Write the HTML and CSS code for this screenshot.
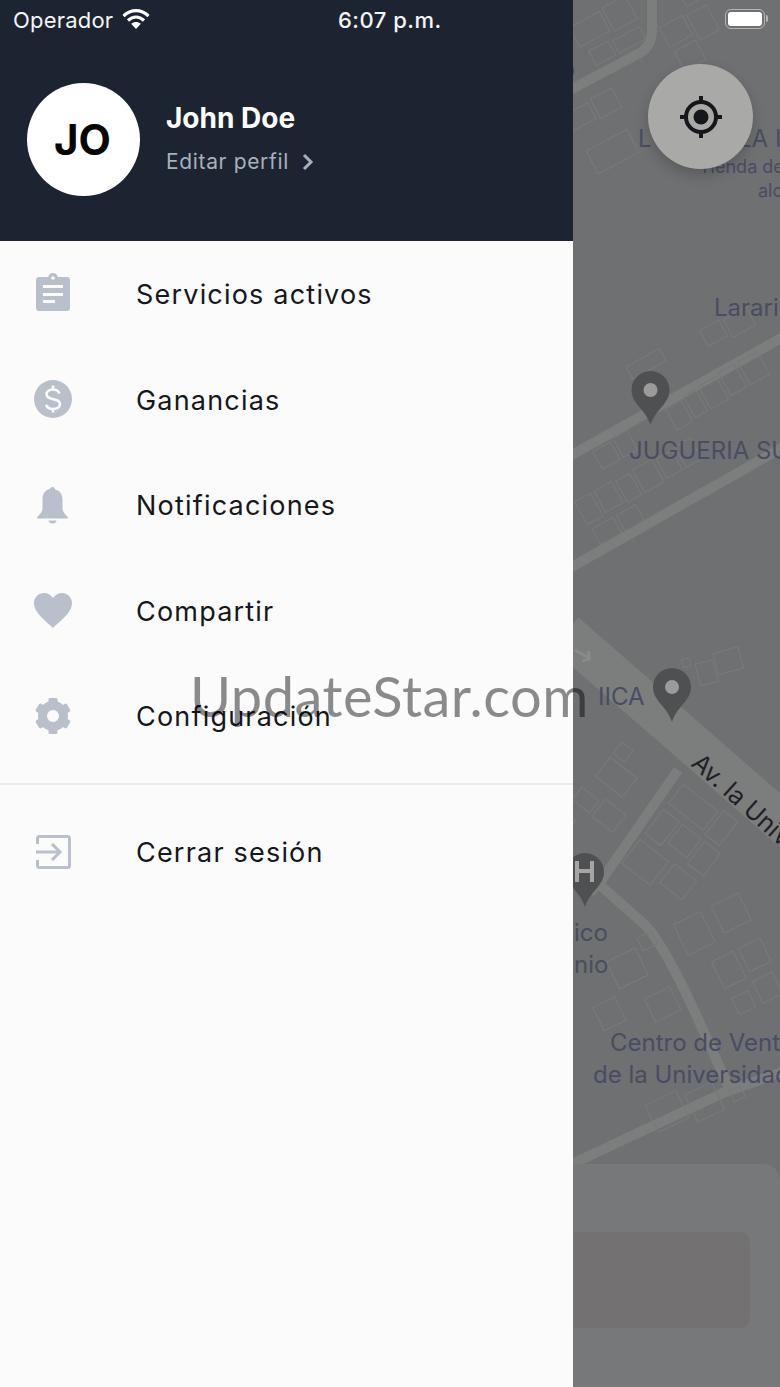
FILE: index.html
```html
<!DOCTYPE html>
<html lang="es">
<head>
    <meta charset="UTF-8">
    <meta name="viewport" content="width=device-width, initial-scale=1.0">
    <title>Menu</title>
    <link rel="stylesheet" href="styles.css">
</head>
<body>
    <div class="screen">
        <aside class="drawer">
            <header class="profile">
                <div class="avatar">JO</div>
                <div class="profile-info">
                    <div class="profile-name">John Doe</div>
                    <div class="profile-edit">
                        <span>Editar perfil</span>
                        <svg class="chevron" width="12" height="18" viewBox="0 0 12 18"><path d="M2 2l7 7-7 7"/></svg>
                    </div>
                </div>
            </header>

            <nav class="menu">
                <a class="menu-item">
                    <svg class="menu-icon" viewBox="0 0 44 44">
                        <rect class="solid" x="5" y="5" width="34" height="34" rx="3"/>
                        <circle class="solid" cx="22" cy="6" r="5"/>
                        <circle class="cut" cx="22" cy="6" r="1.800"/>
                        <rect class="cut" x="12" y="13" width="20" height="3"/>
                        <rect class="cut" x="12" y="21" width="20" height="3"/>
                        <rect class="cut" x="12" y="28" width="12" height="3"/>
                    </svg>
                    <span>Servicios activos</span>
                </a>
                <a class="menu-item">
                    <svg class="menu-icon" viewBox="0 0 44 44">
                        <circle class="solid" cx="22" cy="22" r="19"/>
                        <path class="cut-line" d="M28.500 16.500c-1-2.800-3.500-4-6.500-4-3.600 0-6.500 1.800-6.500 4.800 0 6.500 13.500 3.300 13.500 9.800 0 3.100-3 4.900-7 4.900-3.500 0-6-1.500-7-4.300M22 8.500v4M22 31.500v4"/>
                    </svg>
                    <span>Ganancias</span>
                </a>
                <a class="menu-item">
                    <svg class="menu-icon" viewBox="0 0 44 44">
                        <path class="solid" d="M21.500 4c1.600 0 2.500 1 2.600 2.400 5 1.200 7.400 5 7.400 10v9c0 3 2 5 5.500 9v1H6v-1c3.500-4 5.500-6 5.500-9v-9c0-5.400 2.400-9.200 7.400-10.400C19 5 20 4 21.500 4z"/>
                        <path class="solid" d="M17.500 37.500h8c0 4-8 4-8 0z"/>
                    </svg>
                    <span>Notificaciones</span>
                </a>
                <a class="menu-item">
                    <svg class="menu-icon" viewBox="0 0 44 44">
                        <path class="solid" d="M22 40C16 34 3 25 3 15 3 9 8 5 13 5c4 0 7 2 9 5 2-3 5-5 9-5 5 0 10 4 10 10 0 10-13 19-19 25z"/>
                    </svg>
                    <span>Compartir</span>
                </a>
                <a class="menu-item">
                    <svg class="menu-icon" viewBox="0 0 44 44">
                        <circle class="ring" cx="22" cy="22" r="10.500"/>
                        <g class="solid">
                            <rect x="17.500" y="4" width="9" height="7" rx="1.500"/>
                            <rect x="17.500" y="4" width="9" height="7" rx="1.500" transform="rotate(60 22 22)"/>
                            <rect x="17.500" y="4" width="9" height="7" rx="1.500" transform="rotate(120 22 22)"/>
                            <rect x="17.500" y="4" width="9" height="7" rx="1.500" transform="rotate(180 22 22)"/>
                            <rect x="17.500" y="4" width="9" height="7" rx="1.500" transform="rotate(240 22 22)"/>
                            <rect x="17.500" y="4" width="9" height="7" rx="1.500" transform="rotate(300 22 22)"/>
                        </g>
                    </svg>
                    <span>Configuración</span>
                </a>
            </nav>

            <div class="menu-divider"></div>

            <nav class="menu">
                <a class="menu-item">
                    <svg class="menu-icon" viewBox="0 0 44 44">
                        <path class="line" d="M6.500 15V9.500a2 2 0 0 1 2-2h28a2 2 0 0 1 2 2v27a2 2 0 0 1-2 2h-28a2 2 0 0 1-2-2V31"/>
                        <path class="line" d="M5 23h24M21 15l8 8-8 8"/>
                    </svg>
                    <span>Cerrar sesión</span>
                </a>
            </nav>
        </aside>

        <main class="map">
            <svg class="map-canvas" viewBox="573 0 207 1387" width="207" height="1387">
                <g class="roads">
                    <path d="M570 90L640 53Q652 46 652 30V-5"/>
                    <path d="M570 456L785 336"/>
                    <path d="M570 568L785 446"/>
                    <path class="road-wide" d="M565 633L790 829"/>
                    <path d="M678 770L603 878 590 893M600 885L645 925Q665 945 703 1030L730 1090"/>
                    <path d="M570 1165L723 1093 785 1071"/>
                </g>

                <g class="lots">
                    <g transform="rotate(-28 610 40)">
                        <rect x="580" y="10" width="34" height="22"/>
                        <rect x="618" y="8" width="26" height="26"/>
                        <rect x="586" y="40" width="22" height="16"/>
                        <rect x="612" y="42" width="30" height="14"/>
                    </g>
                    <g transform="rotate(-28 700 40)">
                        <rect x="670" y="10" width="26" height="22"/>
                        <rect x="700" y="12" width="22" height="28"/>
                        <rect x="672" y="38" width="24" height="22"/>
                        <rect x="704" y="-20" width="34" height="24"/>
                    </g>
                    <g transform="rotate(-28 600 130)">
                        <rect x="576" y="100" width="26" height="18"/>
                        <rect x="606" y="98" width="24" height="22"/>
                        <rect x="578" y="142" width="46" height="26"/>
                    </g>
                    <g transform="rotate(-29 690 400)">
                        <rect x="650" y="340" width="38" height="14"/>
                        <rect x="580" y="398" width="20" height="20"/>
                        <rect x="604" y="396" width="16" height="22"/>
                        <rect x="664" y="396" width="18" height="24"/>
                        <rect x="686" y="394" width="14" height="24"/>
                        <rect x="704" y="392" width="20" height="26"/>
                        <rect x="728" y="390" width="18" height="26"/>
                        <rect x="750" y="390" width="22" height="26"/>
                        <rect x="732" y="344" width="22" height="18"/>
                        <rect x="758" y="346" width="26" height="20"/>
                    </g>
                    <g transform="rotate(-29 640 500)">
                        <rect x="582" y="470" width="18" height="26"/>
                        <rect x="604" y="470" width="20" height="24"/>
                        <rect x="628" y="472" width="16" height="24"/>
                        <rect x="648" y="470" width="22" height="26"/>
                        <rect x="674" y="472" width="18" height="22"/>
                        <rect x="696" y="470" width="18" height="24"/>
                        <rect x="584" y="502" width="24" height="18"/>
                        <rect x="612" y="502" width="22" height="18"/>
                    </g>
                    <g transform="rotate(-15 720 665)">
                        <rect x="696" y="658" width="18" height="22"/>
                        <rect x="716" y="652" width="26" height="22"/>
                        <rect x="684" y="650" width="8" height="8"/>
                    </g>
                    <g transform="rotate(38 610 790)">
                        <rect x="590" y="745" width="14" height="14"/>
                        <rect x="590" y="764" width="34" height="24"/>
                        <rect x="586" y="805" width="22" height="16"/>
                        <rect x="612" y="800" width="26" height="22"/>
                        <rect x="582" y="835" width="20" height="18"/>
                    </g>
                    <g transform="rotate(38 670 850)">
                        <rect x="640" y="790" width="44" height="24"/>
                        <rect x="688" y="786" width="18" height="30"/>
                        <rect x="640" y="822" width="20" height="30"/>
                        <rect x="664" y="822" width="24" height="24"/>
                        <rect x="692" y="822" width="20" height="28"/>
                        <rect x="640" y="860" width="36" height="30"/>
                        <rect x="682" y="858" width="28" height="24"/>
                    </g>
                    <g transform="rotate(-26 640 990)">
                        <rect x="622" y="950" width="32" height="30"/>
                        <rect x="660" y="942" width="16" height="14"/>
                        <rect x="590" y="985" width="24" height="26"/>
                        <rect x="640" y="1000" width="28" height="26"/>
                        <rect x="594" y="1096" width="34" height="30"/>
                        <rect x="634" y="1104" width="30" height="30"/>
                        <rect x="676" y="1120" width="12" height="12"/>
                    </g>
                    <g transform="rotate(-26 740 970)">
                        <rect x="718" y="950" width="24" height="30"/>
                        <rect x="748" y="950" width="24" height="26"/>
                        <rect x="720" y="992" width="18" height="18"/>
                        <rect x="746" y="986" width="22" height="24"/>
                        <rect x="700" y="900" width="30" height="34"/>
                        <rect x="742" y="900" width="30" height="30"/>
                    </g>
                </g>

                <g class="labels">
                    <text x="564" y="76" class="label-small">p</text>
                    <text x="638" y="147">L</text>
                    <text x="738" y="147">LA I</text>
                    <text x="699" y="173" class="label-small">Tienda de</text>
                    <text x="758" y="197" class="label-small">alo</text>
                    <text x="714" y="316">Lararium</text>
                    <text x="629" y="459">JUGUERIA SUR</text>
                    <text x="598" y="705">IICA</text>
                    <text x="574" y="941">ico</text>
                    <text x="574" y="973">nio</text>
                    <text x="610" y="1051">Centro de Venta</text>
                    <text x="593" y="1083">de la Universidad</text>
                    <text class="label-road" x="690" y="765" transform="rotate(42 690 765)">Av. la Universidad</text>
                </g>

                <path class="pin-arrow" d="M575 650l14 8M590 659l-2-8M590 659l-8 2"/>

                <g class="pins">
                    <path d="M650.500 371c-10.500 0-19 8.500-19 19 0 14 14 19 19 35 5-16 19-21 19-35 0-10.500-8.500-19-19-19z"/>
                    <path d="M672 668c-10.500 0-19 8.500-19 19 0 14 14 19 19 35 5-16 19-21 19-35 0-10.500-8.500-19-19-19z"/>
                    <path d="M585 853c-10.500 0-19 8.500-19 19 0 14 14 19 19 35 5-16 19-21 19-35 0-10.500-8.500-19-19-19z"/>
                    <circle class="pin-hole" cx="650.500" cy="390" r="7"/>
                    <circle class="pin-hole" cx="672" cy="687" r="7"/>
                    <path class="pin-h" d="M577 861v21M592 861v21M577 871h15"/>
                </g>

                <rect class="sheet" x="560" y="1164" width="220" height="240" rx="16"/>
                <rect class="sheet-inner" x="560" y="1232" width="190" height="96" rx="10"/>
            </svg>

            <button class="locate">
                <svg width="44" height="44" viewBox="0 0 44 44">
                    <circle class="locate-ring" cx="22" cy="22" r="15"/>
                    <circle class="locate-dot" cx="22" cy="22" r="7.500"/>
                    <path class="locate-ticks" d="M22 1v6M22 37v6M1 22h6M37 22h6"/>
                </svg>
            </button>
        </main>

        <div class="status-bar">
            <div class="status-left">
                <span>Operador</span>
                <svg class="wifi" width="28" height="21" viewBox="0 0 28 21">
                    <path d="M1.500 8C9 .8 19 .8 26.500 8M6 12.500c5-4.500 11-4.500 16 0"/>
                    <path class="wifi-tip" d="M14 21l-4.800-5.200c3-2.300 6.600-2.300 9.600 0z"/>
                </svg>
            </div>
            <div class="status-time">6:07 p.m.</div>
            <div class="battery"><div class="battery-fill"></div></div>
        </div>

        <div class="watermark">UpdateStar.com</div>
    </div>
</body>
</html>
```

FILE: styles.css
```css
* {
    box-sizing: border-box;
}

body {
    margin: 0;
    font-family: Inter, "Liberation Sans", sans-serif;
    background: #6f7072;
}

.screen {
    position: relative;
    display: flex;
    width: 780px;
    height: 1387px;
    overflow: hidden;
}

/* drawer */
.drawer {
    width: 573px;
    flex-shrink: 0;
    background: #fbfbfb;
}

.profile {
    height: 241px;
    padding: 83px 0 0 27px;
    display: flex;
    gap: 26px;
    background: #1c2431;
}

.avatar {
    width: 113px;
    height: 113px;
    padding-right: 2px;
    display: flex;
    align-items: center;
    justify-content: center;
    border-radius: 50%;
    background: white;
    color: #050505;
    font-size: 42px;
    font-weight: 700;
}

.profile-info {
    padding-top: 18px;
}

.profile-name {
    color: white;
    font-size: 28px;
    font-weight: 700;
    line-height: 34px;
}

.profile-edit {
    margin-top: 14px;
    display: flex;
    align-items: center;
    gap: 13px;
    color: #a9b0bb;
    font-size: 21px;
    line-height: 26px;
    letter-spacing: 0.65px;
}

.chevron path {
    fill: none;
    stroke: #a9b0bb;
    stroke-width: 3;
}

.menu-item {
    height: 105.5px;
    padding-left: 31px;
    display: flex;
    align-items: center;
    gap: 61px;
    color: #14171c;
    font-size: 27px;
    letter-spacing: 1.2px;
}

.menu-item span {
    margin-top: 2px;
}

.menu-icon {
    width: 44px;
    height: 44px;
    flex-shrink: 0;
}

.menu-icon .solid {
    fill: #b9bfcb;
}

.menu-icon .cut {
    fill: #fbfbfb;
}

.menu-icon .cut-line {
    fill: none;
    stroke: #fbfbfb;
    stroke-width: 2.600;
}

.menu-icon .ring {
    fill: none;
    stroke: #b9bfcb;
    stroke-width: 9;
}

.menu-icon .line {
    fill: none;
    stroke: #b9bfcb;
    stroke-width: 3;
}

.menu-divider {
    height: 2px;
    margin: 14px 0;
    background: #ececee;
}

/* map behind the drawer */
.map {
    position: relative;
    flex: 1;
    background: #6f7072;
}

.map-canvas {
    display: block;
}

.roads path {
    fill: none;
    stroke: #7c7d7d;
    stroke-width: 10;
}

.roads .road-wide {
    stroke-width: 41;
}

.lots rect {
    fill: none;
    stroke: #787979;
    stroke-width: 1.200;
}

.labels text {
    fill: #484d60;
    font-size: 24px;
}

.labels .label-small {
    font-size: 18px;
}

.labels .label-road {
    fill: #1f2126;
    font-size: 25px;
}

.pin-arrow {
    fill: none;
    stroke: #8a8a8a;
    stroke-width: 3;
}

.pins path {
    fill: #4f5052;
}

.pins .pin-hole {
    fill: #9b9b9b;
}

.pins .pin-h {
    fill: none;
    stroke: #a5a5a5;
    stroke-width: 4;
}

.sheet {
    fill: #77787a;
}

.sheet-inner {
    fill: #737172;
}

.locate {
    position: absolute;
    top: 64px;
    left: 75px;
    width: 105px;
    height: 105px;
    padding: 0;
    display: flex;
    align-items: center;
    justify-content: center;
    border: none;
    border-radius: 50%;
    background: #a9a9a7;
    box-shadow: 0 6px 14px rgba(0, 0, 0, 0.2);
}

.locate-ring {
    fill: none;
    stroke: #15171b;
    stroke-width: 4;
}

.locate-dot {
    fill: #15171b;
}

.locate-ticks {
    fill: none;
    stroke: #15171b;
    stroke-width: 4;
}

/* status bar, drawn over the drawer and the map */
.status-bar {
    position: absolute;
    top: 0;
    left: 0;
    width: 100%;
    height: 40px;
    color: #f4f5f6;
    font-size: 22px;
}

.status-left {
    position: absolute;
    left: 13px;
    top: 7px;
    display: flex;
    gap: 9px;
    line-height: 26px;
    letter-spacing: 0.2px;
}

.wifi {
    margin-top: 1px;
}

.wifi path {
    fill: none;
    stroke: white;
    stroke-width: 3.200;
}

.wifi .wifi-tip {
    fill: white;
    stroke: none;
}

.status-time {
    position: absolute;
    left: 338px;
    top: 7px;
    font-weight: 500;
    line-height: 26px;
    letter-spacing: 0.5px;
}

.battery {
    position: absolute;
    left: 725px;
    top: 9px;
    width: 40px;
    height: 20px;
    padding: 2px;
    border: 1.500px solid #b4b4b4;
    border-radius: 6px;
}

.battery::after {
    content: "";
    position: absolute;
    left: 40px;
    top: 5px;
    width: 2px;
    height: 7px;
    border-radius: 0 2px 2px 0;
    background: #b4b4b4;
}

.battery-fill {
    height: 100%;
    border-radius: 3px;
    background: white;
}

.watermark {
    position: absolute;
    left: 190px;
    top: 658px;
    color: rgba(0, 0, 0, 0.45);
    font-family: Lato, sans-serif;
    font-size: 56px;
    line-height: 76px;
    letter-spacing: 0.5px;
    white-space: nowrap;
}
```
